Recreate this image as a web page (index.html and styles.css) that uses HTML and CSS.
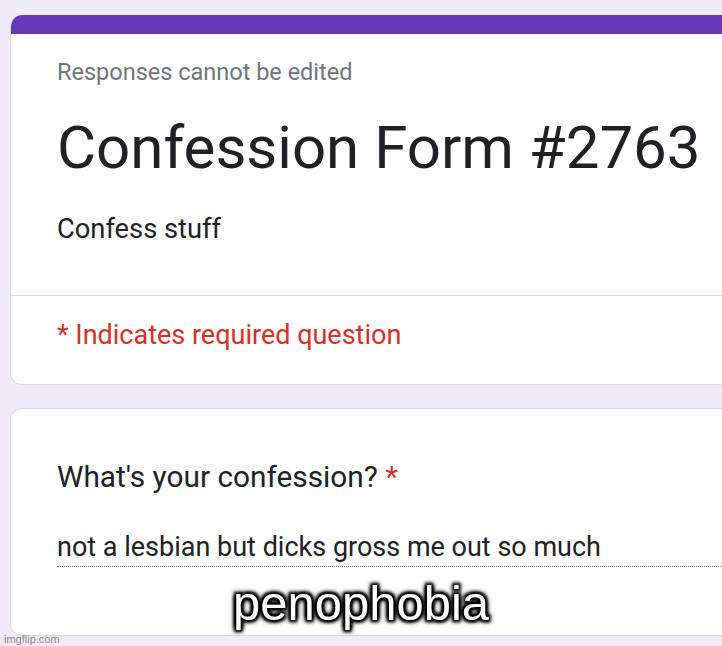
FILE: index.html
```html
<!DOCTYPE html>
<html lang="en">
<head>
    <meta charset="UTF-8">
    <title>Confession Form #2763</title>
    <link rel="stylesheet" href="styles.css">
</head>
<body>
<div class="page">
    <div class="card headerCard">
        <div class="topBar"></div>
        <div class="headerTop">
            <div class="notice">Responses cannot be edited</div>
            <div class="formTitle">Confession Form #2763</div>
            <div class="formDesc">Confess stuff</div>
        </div>
        <div class="headerBottom">
            <div class="required">* Indicates required question</div>
        </div>
    </div>

    <div class="card questionCard">
        <div class="question">What's your confession? <span class="star">*</span></div>
        <div class="answer">not a lesbian but dicks gross me out so much</div>
    </div>
</div>
<div class="caption">penophobia</div>
<div class="watermark">imgflip.com</div>
</body>
</html>
```

FILE: styles.css
```css
html, body{
    margin: 0;
    height: 100%;
}
body{
    background-color: #f0ebf8;
    font-family: Roboto, "Noto Sans", Arial, sans-serif;
    overflow: hidden;
    position: relative;
}
.page{
    padding: 15px 0 0 10px;
    width: 760px;
}
.card{
    background-color: white;
    border: 1px solid #dadce0;
    border-radius: 12px;
}
.headerCard{
    border-top: none;
    overflow: hidden;
}
.topBar{
    height: 19px;
    background-color: #673ab7;
}
.headerTop{
    padding: 23px 46px 48px 46px;
    border-bottom: 1px solid #dadce0;
}
.notice{
    font-size: 23.5px;
    line-height: 30px;
    color: #70757a;
}
.formTitle{
    font-size: 60px;
    line-height: 76px;
    color: #202124;
    margin-top: 23px;
}
.formDesc{
    font-size: 27.3px;
    line-height: 36px;
    color: #202124;
    margin-top: 25px;
}
.headerBottom{
    padding: 23px 46px 33px 46px;
}
.required{
    font-size: 27px;
    line-height: 32px;
    color: #d93025;
}
.questionCard{
    margin-top: 23px;
    padding: 50px 0 68px 46px;
}
.question{
    font-size: 29.8px;
    line-height: 36px;
    color: #202124;
}
.star{
    color: #d93025;
}
.answer{
    margin-top: 36px;
    font-size: 27px;
    line-height: 32px;
    color: #202124;
    padding-bottom: 3px;
    border-bottom: 1px dotted #70757a;
}
.caption{
    position: absolute;
    left: 0;
    right: 0;
    top: 575px;
    text-align: center;
    font-family: "Liberation Sans", Arial, sans-serif;
    font-size: 49px;
    line-height: 56px;
    color: white;
    text-shadow: 2px 2px 3px black, -2px -2px 3px black, 2px -2px 3px black, -2px 2px 3px black, 0 0 6px black, 0 0 6px black, 0 0 3px black;
}
.watermark{
    position: absolute;
    left: 4px;
    bottom: 1px;
    font-family: "Liberation Sans", Arial, sans-serif;
    font-size: 11px;
    color: #8a8a8a;
}
```
